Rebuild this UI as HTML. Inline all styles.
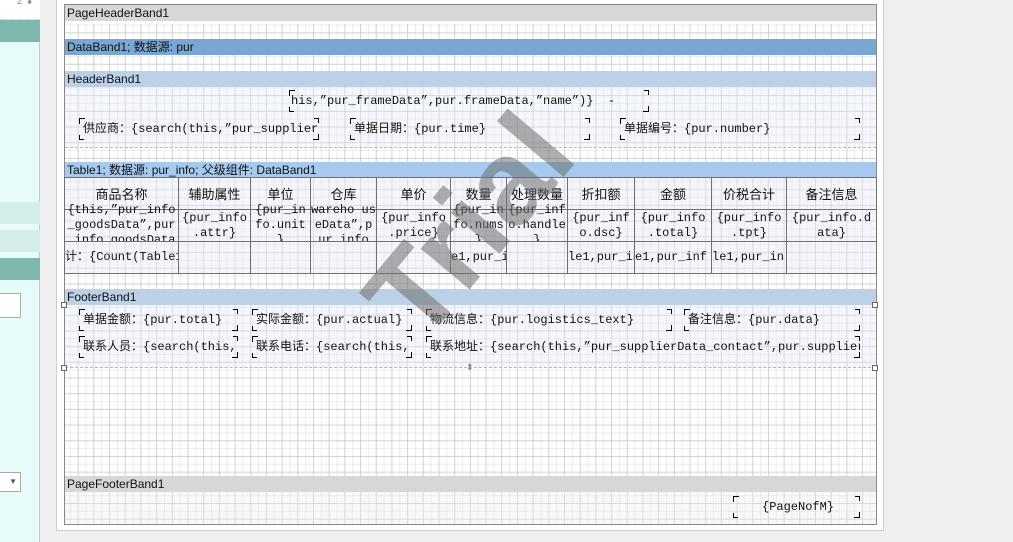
<!DOCTYPE html>
<html><head><meta charset="utf-8"><style>
*{margin:0;padding:0;box-sizing:border-box}
body{width:1013px;height:542px;overflow:hidden;background:#f0f0f0;position:relative;font-family:"Liberation Sans","Noto Sans CJK SC",sans-serif;font-size:12px;color:#111}
.abs{position:absolute}
#left{left:0;top:0;width:40px;height:542px;background:#e6fbfa;border-right:1px solid #c8c8c8}
#page{left:56px;top:0;width:828px;height:531px;background:#fff;border:1px solid #ccc;border-top:none}
#design{left:64px;top:4px;width:813px;height:521px;border:1px solid #888;
background-color:#fff;
background-image:linear-gradient(90deg,rgba(190,190,190,.55) 1px,transparent 1px),linear-gradient(rgba(190,190,190,.55) 1px,transparent 1px),linear-gradient(90deg,rgba(215,215,215,.45) 1px,transparent 1px),linear-gradient(rgba(215,215,215,.45) 1px,transparent 1px);
background-size:15.7px 15.7px,15.7px 15.7px,7.85px 7.85px,7.85px 7.85px;background-position:-3px -4px}
.bar{position:absolute;left:65px;width:811px;height:16px;font-size:12px;line-height:16px;padding-left:2px}
.area{position:absolute;left:65px;width:811px;background:rgba(225,232,245,.35)}
.m{font-family:"Liberation Mono","Noto Sans CJK SC",monospace;font-size:12px;white-space:nowrap;overflow:hidden;position:absolute}
.f{position:absolute;height:22px;line-height:22px;padding-left:4px}
.f:before,.f:after{content:"";position:absolute;width:5px;height:5px}
.f:before{left:0;top:0;border-left:1px solid #000;border-top:1px solid #000}
.f:after{right:0;bottom:0;border-right:1px solid #000;border-bottom:1px solid #000}
.f i{position:absolute;width:5px;height:5px}
.f i.a{right:0;top:0;border-right:1px solid #000;border-top:1px solid #000}
.f i.b{left:0;bottom:0;border-left:1px solid #000;border-bottom:1px solid #000}
table{position:absolute;left:64px;top:177px;width:812px;border-collapse:collapse;table-layout:fixed}
td{border:1px solid #707070;text-align:center;padding:0;font-family:"Liberation Mono","Noto Sans CJK SC",monospace;font-size:12px;background:rgba(230,236,248,.45);height:32px}
td div{height:31px;overflow:hidden;line-height:15px;white-space:normal;word-break:break-all;display:flex;flex-direction:column;justify-content:center}
td div.t{justify-content:flex-start;margin-top:-7px;height:38px}
tr.h td{font-family:"Liberation Sans","Noto Sans CJK SC",sans-serif;font-size:13px}
tr.s td div{white-space:nowrap;text-align:left;display:block;line-height:31px;font-family:"Liberation Mono","Noto Sans CJK SC",monospace;font-size:12px}
.h2{position:absolute;width:6px;height:6px;border:1px solid #666;background:#fff}
</style></head><body>
<div id="left" class="abs">
 <div class="abs" style="left:0;top:0;width:40px;height:20px;background:#fff;border-bottom:1px dotted #ccc"></div>
 <div class="abs" style="left:17px;top:-4px;font-size:10px;color:#88a">2 ⬍</div>
 <div class="abs" style="left:0;top:20px;width:40px;height:22px;background:#7db7ae"></div>
 <div class="abs" style="left:0;top:202px;width:40px;height:22px;background:#d4ede8"></div>
 <div class="abs" style="left:0;top:230px;width:40px;height:22px;background:#d4ede8"></div>
 <div class="abs" style="left:0;top:258px;width:40px;height:22px;background:#7db7ae"></div>
 <div class="abs" style="left:0;top:293px;width:21px;height:25px;background:#fff;border:1px solid #aaa;border-left:none"></div>
 <div class="abs" style="left:0;top:472px;width:21px;height:20px;background:#fff;border:1px solid #aaa;border-left:none;font-size:8px;color:#555;text-align:right;padding:4px 3px 0 0">▼</div>
</div>
<div id="page" class="abs"></div>
<div id="design" class="abs"></div>

<div class="bar" style="top:5px;background:#d7d7d7">PageHeaderBand1</div>
<div class="area" style="top:21px;height:3px;background:#fff"></div>
<div class="bar" style="top:39px;background:#78a7d6">DataBand1; 数据源: pur</div>
<div class="bar" style="top:71px;background:#bcd0e7">HeaderBand1</div>
<div class="area" style="top:87px;height:61px;border-bottom:1px dashed #a8bcd8"></div>
<div class="bar" style="top:162px;background:#a5c9ef">Table1; 数据源: pur_info; 父级组件: DataBand1</div>
<div class="bar" style="top:289px;background:#bcd0e7">FooterBand1</div>
<div class="area" style="top:305px;height:63px;border-bottom:1px dashed #a8bcd8"></div>
<div class="bar" style="top:476px;background:#d7d7d7">PageFooterBand1</div>
<div class="area" style="top:492px;height:32px;background:rgba(235,235,235,.35)"></div>

<div class="m f" style="left:289px;top:90px;width:360px;"><i class="a"></i><i class="b"></i><span style="margin-left:-2px">his,”pur_frameData”,pur.frameData,”name”)} &nbsp;-</span></div>
<div class="m f" style="left:79px;top:118px;width:240px"><i class="a"></i><i class="b"></i>供应商：{search(this,”pur_supplier</div>
<div class="m f" style="left:350px;top:118px;width:240px"><i class="a"></i><i class="b"></i>单据日期：{pur.time}</div>
<div class="m f" style="left:620px;top:118px;width:240px"><i class="a"></i><i class="b"></i>单据编号：{pur.number}</div>

<table>
<colgroup><col style="width:114px"><col style="width:72px"><col style="width:60px"><col style="width:66px"><col style="width:74px"><col style="width:56px"><col style="width:61px"><col style="width:67px"><col style="width:77px"><col style="width:75px"><col style="width:90px"></colgroup>
<tr class="h"><td>商品名称</td><td>辅助属性</td><td>单位</td><td>仓库</td><td>单价</td><td>数量</td><td>处理数量</td><td>折扣额</td><td>金额</td><td>价税合计</td><td>备注信息</td></tr>
<tr class="r"><td><div class="t">{this,”pur_info _goodsData”,pur _info.goodsData</div></td><td><div>{pur_info .attr}</div></td><td><div class="t">{pur_in fo.unit }</div></td><td><div class="t">wareho us eData”,p ur_info</div></td><td><div>{pur_info .price}</div></td><td><div class="t">{pur_in fo.nums }</div></td><td><div class="t">{pur_inf o.handle }</div></td><td><div>{pur_inf o.dsc}</div></td><td><div>{pur_info .total}</div></td><td><div>{pur_info .tpt}</div></td><td><div>{pur_info.d ata}</div></td></tr>
<tr class="s"><td><div>计：{Count(Table1</div></td><td></td><td></td><td></td><td></td><td><div>e1,pur_in</div></td><td></td><td><div>le1,pur_in</div></td><td><div>e1,pur_inf</div></td><td><div>le1,pur_in</div></td><td></td></tr>
</table>

<div class="m f" style="left:79px;top:309px;width:159px"><i class="a"></i><i class="b"></i>单据金额：{pur.total}</div>
<div class="m f" style="left:252px;top:309px;width:160px"><i class="a"></i><i class="b"></i>实际金额：{pur.actual}</div>
<div class="m f" style="left:426px;top:309px;width:246px"><i class="a"></i><i class="b"></i>物流信息：{pur.logistics_text}</div>
<div class="m f" style="left:684px;top:309px;width:176px"><i class="a"></i><i class="b"></i>备注信息：{pur.data}</div>
<div class="m f" style="left:79px;top:336px;width:159px"><i class="a"></i><i class="b"></i>联系人员：{search(this,</div>
<div class="m f" style="left:252px;top:336px;width:160px"><i class="a"></i><i class="b"></i>联系电话：{search(this,</div>
<div class="m f" style="left:426px;top:336px;width:434px"><i class="a"></i><i class="b"></i>联系地址：{search(this,”pur_supplierData_contact”,pur.supplier</div>
<div class="h2" style="left:61px;top:302px"></div><div class="h2" style="left:61px;top:365px"></div>
<div class="h2" style="left:872px;top:302px"></div><div class="h2" style="left:872px;top:365px"></div>
<div class="abs" style="left:466px;top:362px;font-size:9px;color:#888">⬍</div>

<div class="m f" style="left:733px;top:496px;width:127px;padding-left:29px"><i class="a"></i><i class="b"></i>{PageNofM}</div>

<div class="abs" style="left:304px;top:166px;width:330px;text-align:center;font-family:'Liberation Sans',sans-serif;font-weight:bold;font-size:120px;line-height:120px;color:rgba(110,110,110,.55);transform:rotate(-50deg);transform-origin:center">Trial</div>
</body></html>
